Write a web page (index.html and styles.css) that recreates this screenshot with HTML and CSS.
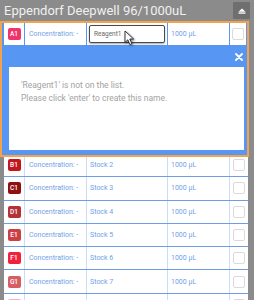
FILE: index.html
```html
<!DOCTYPE html>
<html lang="en">
<head>
  <meta charset="UTF-8">
  <title>Eppendorf Deepwell 96/1000uL</title>
  <link rel="stylesheet" href="styles.css">
</head>
<body>
  <div class="topbar">
    <span class="title">Eppendorf Deepwell 96/1000uL</span>
    <button class="collapse">
      <svg width="8" height="6" viewBox="0 0 8 6"><path d="M4 0.5 L7.5 3.8 H0.5 Z" fill="#fff"/><rect x="0.5" y="4.4" width="7" height="1.3" fill="#fff"/></svg>
    </button>
  </div>

  <div class="editing">
    <div class="row row-active">
      <div class="cell"><span class="well" style="background:#f0336b">A1</span></div>
      <div class="cell conc">Concentration: -</div>
      <div class="cell name"><input class="name-input" type="text" value="Reagent1"></div>
      <div class="cell vol">1000 µL</div>
      <div class="cell check"><span class="box"></span></div>
      <svg class="cursor" width="11" height="16" viewBox="0 0 11 16"><path d="M1 1 L1 12.5 L3.8 9.8 L5.9 14.6 L7.9 13.7 L5.8 9 L9.6 9 Z" fill="#fff" stroke="#222" stroke-width="0.9" stroke-linejoin="round"/></svg>
    </div>
    <div class="notice">
      <div class="notice-bar">
        <svg width="8" height="8" viewBox="0 0 8 8"><path d="M1 1 L7 7 M7 1 L1 7" stroke="#fff" stroke-width="1.8" stroke-linecap="round"/></svg>
      </div>
      <div class="notice-body">
        <p>'Reagent1' is not on the list.</p>
        <p>Please click 'enter' to create this name.</p>
      </div>
    </div>
  </div>

  <div class="rows">
    <div class="row">
      <div class="cell"><span class="well" style="background:#c2161c">B1</span></div>
      <div class="cell conc">Concentration: -</div>
      <div class="cell name">Stock 2</div>
      <div class="cell vol">1000 µL</div>
      <div class="cell check"><span class="box"></span></div>
    </div>
    <div class="row">
      <div class="cell"><span class="well" style="background:#8e1010">C1</span></div>
      <div class="cell conc">Concentration: -</div>
      <div class="cell name">Stock 3</div>
      <div class="cell vol">1000 µL</div>
      <div class="cell check"><span class="box"></span></div>
    </div>
    <div class="row">
      <div class="cell"><span class="well" style="background:#b33236">D1</span></div>
      <div class="cell conc">Concentration: -</div>
      <div class="cell name">Stock 4</div>
      <div class="cell vol">1000 µL</div>
      <div class="cell check"><span class="box"></span></div>
    </div>
    <div class="row">
      <div class="cell"><span class="well" style="background:#cc4045">E1</span></div>
      <div class="cell conc">Concentration: -</div>
      <div class="cell name">Stock 5</div>
      <div class="cell vol">1000 µL</div>
      <div class="cell check"><span class="box"></span></div>
    </div>
    <div class="row">
      <div class="cell"><span class="well" style="background:#f1203c">F1</span></div>
      <div class="cell conc">Concentration: -</div>
      <div class="cell name">Stock 6</div>
      <div class="cell vol">1000 µL</div>
      <div class="cell check"><span class="box"></span></div>
    </div>
    <div class="row">
      <div class="cell"><span class="well" style="background:#d65e62">G1</span></div>
      <div class="cell conc">Concentration: -</div>
      <div class="cell name">Stock 7</div>
      <div class="cell vol">1000 µL</div>
      <div class="cell check"><span class="box"></span></div>
    </div>
    <div class="row">
      <div class="cell"><span class="well" style="background:#f6b3c3">H1</span></div>
      <div class="cell conc">Concentration: -</div>
      <div class="cell name">Stock 8</div>
      <div class="cell vol">1000 µL</div>
      <div class="cell check"><span class="box"></span></div>
    </div>
  </div>
</body>
</html>
```

FILE: styles.css
```css
* { margin: 0; padding: 0; box-sizing: border-box; }
body {
  font-family: Roboto, "Liberation Sans", sans-serif;
  background: #8b8b8b;
  height: 300px;
  overflow: hidden;
}

.topbar {
  display: flex;
  align-items: center;
  justify-content: space-between;
  height: 21px;
  padding: 0 4px;
}
.title { color: #f0f0f0; font-size: 13px; }
.collapse {
  width: 17px;
  height: 17px;
  background: #6f6f6f;
  border: none;
  border-radius: 1px;
  display: flex;
  align-items: center;
  justify-content: center;
}

/* row grid shared by the editing row and the list */
.row {
  display: grid;
  grid-template-columns: 20px 61px 80px 61px 1fr;
  gap: 1px;
  align-items: stretch;
}
.cell {
  background: #fff;
  display: flex;
  align-items: center;
  font-size: 7px;
  color: #6f9fe8;
  white-space: nowrap;
}
.conc { padding-left: 4px; }
.name, .vol { padding-left: 3px; }
.check { justify-content: center; }

.well {
  width: 13px;
  height: 12px;
  margin: 0 auto;
  border-radius: 2px;
  color: #fff;
  font-size: 6.5px;
  font-weight: 500;
  display: flex;
  align-items: center;
  justify-content: center;
}
.box {
  width: 12px;
  height: 12px;
  border: 1px solid #dadada;
  border-radius: 2px;
  background: #fff;
}

/* highlighted row with its message */
.editing {
  width: 249px;
  border: 2px solid #f4a24c;
  background: #5797f3;
  position: relative;
  z-index: 1;
  margin-bottom: -3px;
}
.row-active {
  position: relative;
  height: 22px;
  margin-bottom: 1px;
  padding: 0 1px 0 2px;
}
.name-input {
  width: 76px;
  height: 18px;
  margin-left: -1px;
  border: 1px solid #4a4a4a;
  border-radius: 2px;
  box-shadow: 0 1px 2px rgba(0, 0, 0, 0.35);
  padding: 0 4px;
  font-family: inherit;
  font-size: 6.5px;
  color: #666;
  outline: none;
}
.cursor {
  position: absolute;
  left: 122px;
  top: 7px;
  filter: drop-shadow(1px 1px 1px rgba(0, 0, 0, 0.5));
}

.notice { padding: 0 3px 5px 7px; }
.notice-bar {
  height: 21px;
  display: flex;
  align-items: center;
  justify-content: flex-end;
  padding-right: 1px;
}
.notice-body {
  background: #fff;
  height: 83px;
  padding: 12px 12px;
  font-size: 8.5px;
  line-height: 13px;
  color: #a3a3a3;
}

/* stock list */
.rows { margin: 0 6px 0 4px; }
.rows .row {
  height: 23.3px;
  background: #c9ddfa;
  border-bottom: 1px solid #6e9de5;
}
```
